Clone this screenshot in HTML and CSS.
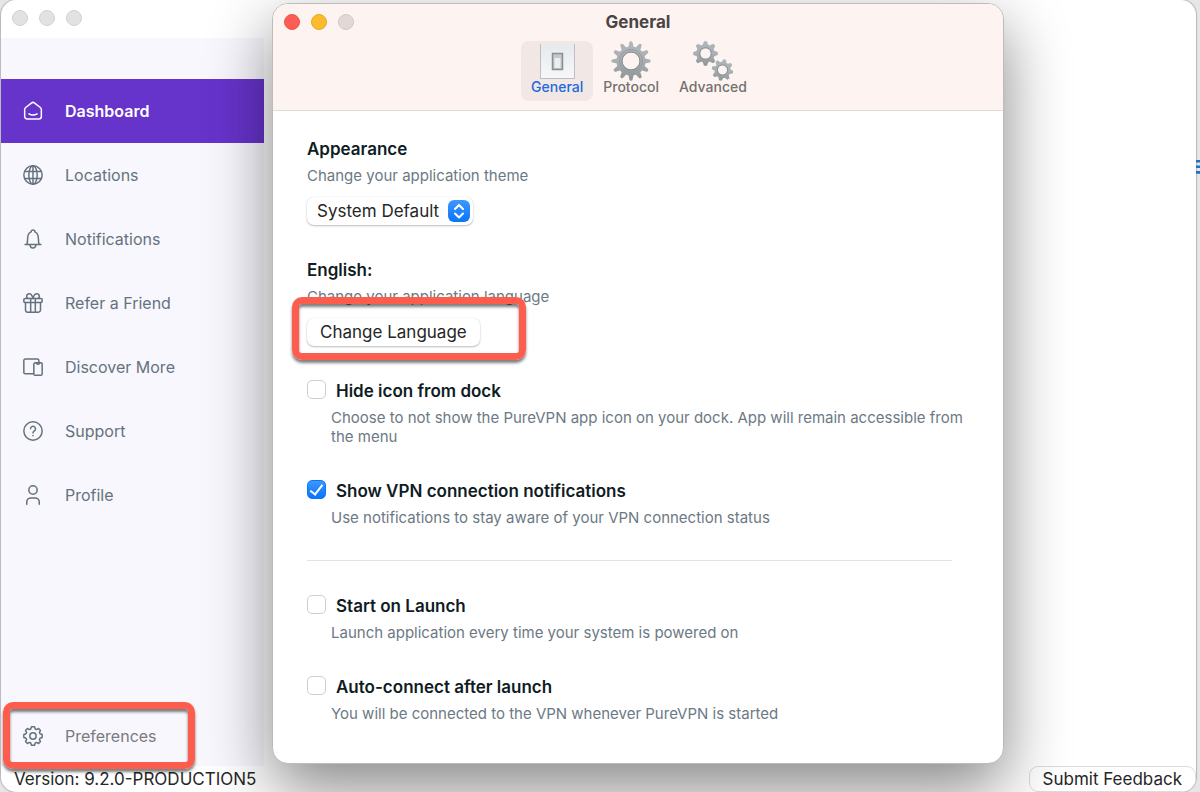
FILE: index.html
```html
<!DOCTYPE html>
<html lang="en">
<head>
  <meta charset="UTF-8" />
  <meta name="viewport" content="width=device-width, initial-scale=1.0"/>
  <title>PureVPN Preferences</title>
  <link rel="stylesheet" href="styles.css">
</head>
<body>

  <!-- Window behind, only its edge shows -->
  <svg class="backdrop-mark" viewBox="0 0 4 14" aria-hidden="true">
    <path d="M0 1.2h4M0 6.8h4M0 12.4h4" fill="none" stroke="#1f72c4" stroke-width="2.6"/>
  </svg>

  <!-- Main window -->
  <div class="app">
    <div class="titlebar">
      <span class="dot"></span>
      <span class="dot"></span>
      <span class="dot"></span>
    </div>

    <nav class="sidebar">
      <a class="nav-item active" href="#dashboard">
        <svg class="nav-icon" viewBox="0 0 24 24"><path d="M2 10.200c0-1 .4-1.800 1.200-2.400L10.400 2.300a2.600 2.600 0 0 1 3.200 0l7.200 5.500c.8.600 1.200 1.400 1.200 2.400V18.500a3 3 0 0 1-3 3H5a3 3 0 0 1-3-3z"/><path d="M7 15.500q5 2.600 10 0"/></svg>
        Dashboard
      </a>
      <a class="nav-item" href="#locations">
        <svg class="nav-icon" viewBox="0 0 24 24"><circle cx="12" cy="12" r="11"/><ellipse cx="12" cy="12" rx="5" ry="11"/><path d="M12 1v22M2.500 7.800h19M2.500 16.200h19"/></svg>
        Locations
      </a>
      <a class="nav-item" href="#notifications">
        <svg class="nav-icon" viewBox="0 0 24 24"><path d="M2.500 18.500h19M4.500 18.500c1-1.500 1-3.500 1-6.500 0-4.500 1.500-7.500 4.200-8.500 0-3 4.600-3 4.600 0 2.700 1 4.200 4 4.200 8.500 0 3 0 5 1 6.500M8.500 18.800a3.500 4 0 0 0 7 0"/></svg>
        Notifications
      </a>
      <a class="nav-item" href="#refer">
        <svg class="nav-icon" viewBox="0 0 24 24"><rect x="1" y="6.500" width="22" height="5" rx="1.500"/><path d="M3 11.500v9A2.500 2.500 0 0 0 5.500 23h13a2.500 2.500 0 0 0 2.500-2.500v-9M9.200 6.500V23M14.800 6.500V23M12 6.500C11 2.500 9.500 1 7.500 1 3.800 1 3.600 6 6 6.500M12 6.500C13 2.500 14.500 1 16.500 1c3.700 0 3.900 5 1.500 5.500"/></svg>
        Refer a Friend
      </a>
      <a class="nav-item" href="#discover">
        <svg class="nav-icon" viewBox="0 0 24 24"><path d="M12.500 20h-10A1.500 1.500 0 0 1 1 18.500V4a1.500 1.500 0 0 1 1.500-1.500h15A1.500 1.500 0 0 1 19 4v3"/><rect x="13" y="7" width="10" height="15" rx="1.500"/><path d="M16 7.500q2 2.500 4 0"/></svg>
        Discover More
      </a>
      <a class="nav-item" href="#support">
        <svg class="nav-icon" viewBox="0 0 24 24"><circle cx="12" cy="12" r="11"/><path d="M9 9.200a3 3 0 1 1 4.600 2.600c-1.100.7-1.600 1.300-1.600 2.700M12 17.500v.3"/></svg>
        Support
      </a>
      <a class="nav-item" href="#profile">
        <svg class="nav-icon" viewBox="0 0 24 24"><circle cx="12" cy="6" r="5"/><path d="M4.500 23v-2.500a5 5 0 0 1 5-5h5a5 5 0 0 1 5 5V23"/></svg>
        Profile
      </a>
      <a class="nav-item preferences callout" href="#preferences">
        <svg class="nav-icon" viewBox="-12 -12 24 24"><path d="M-1.800-11H1.800L2.700-8.400 4.300-7.700 6.700-9 9-6.700 7.700-4.300 8.400-2.700 11-1.800V1.800L8.400 2.700 7.700 4.300 9 6.700 6.700 9 4.300 7.700 2.700 8.400 1.800 11H-1.800L-2.700 8.400-4.300 7.700-6.700 9-9 6.700-7.700 4.300-8.400 2.700-11 1.800V-1.800L-8.400-2.700-7.700-4.300-9-6.700-6.700-9-4.300-7.700-2.700-8.400Z"/><circle r="3.800"/></svg>
        Preferences
      </a>
    </nav>

    <div class="statusbar">
      <span>Version: 9.2.0-PRODUCTION5</span>
      <button class="feedback" type="button">Submit Feedback</button>
    </div>
  </div>

  <!-- Preferences window -->
  <div class="dialog" role="dialog" aria-labelledby="dialogTitle">
    <header class="toolbar">
      <div class="lights">
        <span class="dot red"></span>
        <span class="dot yellow"></span>
        <span class="dot gray"></span>
      </div>
      <h1 id="dialogTitle">General</h1>
      <div class="tabs">
        <button class="tab selected" type="button">
          <svg class="tab-icon" viewBox="0 0 40 40">
            <defs>
              <linearGradient id="plate" x1="0" y1="0" x2="0" y2="1"><stop offset="0" stop-color="#e6eaed"/><stop offset="1" stop-color="#f6f7f8"/></linearGradient>
              <linearGradient id="metal" x1="0" y1="0" x2="0" y2="1"><stop offset="0" stop-color="#b0b6b9"/><stop offset=".5" stop-color="#a9afb2"/><stop offset="1" stop-color="#8e9396"/></linearGradient>
            </defs>
            <rect x="3" y="3" width="35" height="35" fill="#bfbfc0"/>
            <rect x="4" y="3" width="33" height="34" fill="url(#plate)"/>
            <rect x="15.500" y="12.500" width="10" height="16" fill="#c5c8ca" stroke="#8b8f91" stroke-width="1.500"/>
            <rect x="17.500" y="17" width="6" height="10" fill="#eceeef"/>
          </svg>
          General
        </button>
        <button class="tab" type="button">
          <svg class="tab-icon" viewBox="-20 -20 40 40">
            <defs>
              <path id="tooth" d="M-2.800-13 L-1.600-18.500Q-1.400-19.700 0-19.700T1.600-18.500L2.800-13Z"/>
              <g id="cog">
                <circle r="14.500"/>
                <use href="#tooth"/><use href="#tooth" transform="rotate(30)"/><use href="#tooth" transform="rotate(60)"/><use href="#tooth" transform="rotate(90)"/>
                <use href="#tooth" transform="rotate(120)"/><use href="#tooth" transform="rotate(150)"/><use href="#tooth" transform="rotate(180)"/><use href="#tooth" transform="rotate(210)"/>
                <use href="#tooth" transform="rotate(240)"/><use href="#tooth" transform="rotate(270)"/><use href="#tooth" transform="rotate(300)"/><use href="#tooth" transform="rotate(330)"/>
              </g>
              <mask id="cogMask" maskUnits="userSpaceOnUse" x="-20" y="-20" width="40" height="40"><use href="#cog" fill="#fff"/><circle r="8.500" fill="#000"/></mask>
            </defs>
            <rect x="-20" y="-20" width="40" height="40" fill="url(#metal)" mask="url(#cogMask)"/>
            <circle r="11.500" fill="none" stroke="#949a9d"/>
            <circle r="9" fill="none" stroke="#858a8d"/>
          </svg>
          Protocol
        </button>
        <button class="tab" type="button">
          <svg class="tab-icon" viewBox="0 0 40 40">
            <defs>
              <path id="tooth2" d="M-2.800-8.500L-1.500-12.300H1.500L2.800-8.500Z"/>
              <g id="cog2">
                <circle r="9.300"/>
                <use href="#tooth2"/><use href="#tooth2" transform="rotate(45)"/><use href="#tooth2" transform="rotate(90)"/><use href="#tooth2" transform="rotate(135)"/>
                <use href="#tooth2" transform="rotate(180)"/><use href="#tooth2" transform="rotate(225)"/><use href="#tooth2" transform="rotate(270)"/><use href="#tooth2" transform="rotate(315)"/>
              </g>
              <mask id="cogMask2" maskUnits="userSpaceOnUse" x="-13" y="-13" width="26" height="26"><use href="#cog2" fill="#fff"/><circle r="5.300" fill="#000"/></mask>
            </defs>
            <g transform="translate(12.500 12.500)"><rect x="-13" y="-13" width="26" height="26" fill="url(#metal)" mask="url(#cogMask2)"/><circle r="5.800" fill="none" stroke="#8c9194"/></g>
            <g transform="translate(29.500 29) rotate(12) scale(.88)"><rect x="-13" y="-13" width="26" height="26" fill="url(#metal)" mask="url(#cogMask2)"/><circle r="5.800" fill="none" stroke="#8c9194"/></g>
          </svg>
          Advanced
        </button>
      </div>
    </header>

    <div class="content">
      <section>
        <h2><label for="theme">Appearance</label></h2>
        <p>Change your application theme</p>
        <div class="select-wrap">
          <select id="theme">
            <option>System Default</option>
          </select>
          <svg class="stepper" viewBox="0 0 22 22"><path d="M7 9l4-4 4 4M7 13.500l4 4 4-4"/></svg>
        </div>
      </section>

      <section>
        <h2>English:</h2>
        <p>Change your application language</p>
        <div class="language callout">
          <button class="push" type="button">Change Language</button>
        </div>
      </section>

      <section class="option">
        <input type="checkbox" id="hideDock">
        <label for="hideDock">Hide icon from dock</label>
        <p>Choose to not show the PureVPN app icon on your dock. App will remain accessible from the menu</p>
      </section>

      <section class="option">
        <input type="checkbox" id="showNotif" checked>
        <label for="showNotif">Show VPN connection notifications</label>
        <p>Use notifications to stay aware of your VPN connection status</p>
      </section>

      <hr>

      <section class="option">
        <input type="checkbox" id="startLaunch">
        <label for="startLaunch">Start on Launch</label>
        <p>Launch application every time your system is powered on</p>
      </section>

      <section class="option">
        <input type="checkbox" id="autoConnect">
        <label for="autoConnect">Auto-connect after launch</label>
        <p>You will be connected to the VPN whenever PureVPN is started</p>
      </section>
    </div>
  </div>

</body>
</html>
```
FILE: styles.css
```css
*, *::after {
  box-sizing: border-box;
}

body {
  margin: 0;
  min-height: 100vh;
  display: flex;
  padding: 0 4px 0 1px;
  position: relative;
  overflow: hidden;
  font-family: Inter, "Liberation Sans", sans-serif;
  background: #e6e6e8;
}

button, select {
  font-family: inherit;
}

.backdrop-mark {
  position: absolute;
  right: 0;
  top: 160px;
  width: 4px;
  height: 14px;
}

/* Main window */
.app {
  flex: 1;
  display: flex;
  flex-direction: column;
  background: #fff;
  border-radius: 15px;
  box-shadow: 0 0 1px 1px rgba(0,0,0,0.2);
  overflow: hidden;
}

.titlebar {
  display: flex;
  gap: 11px;
  padding: 10px 11px;
  height: 38px;
}

.dot {
  width: 16px;
  height: 16px;
  border-radius: 50%;
  background: #e2e2e2;
  border: 1px solid #d2d2d2;
}

.sidebar {
  flex: 1;
  width: 263px;
  display: flex;
  flex-direction: column;
  padding-top: 41px;
  background: #f8f7fd;
}

.nav-item {
  display: flex;
  align-items: center;
  gap: 22px;
  height: 64px;
  padding-left: 22px;
  font-size: 16px;
  font-weight: 400;
  color: #65727d;
  text-decoration: none;
}

.nav-item.active {
  background: #6633cb;
  color: #fff;
  font-weight: 600;
}

.nav-icon {
  width: 20px;
  height: 20px;
  fill: none;
  stroke: currentColor;
  stroke-width: 1.8;
  stroke-linecap: round;
  stroke-linejoin: round;
}

.nav-item.preferences {
  height: 60px;
  margin-top: auto;
  color: #7a7b7f;
}

.preferences .nav-icon {
  stroke: #65727d;
}

.statusbar {
  display: flex;
  justify-content: space-between;
  height: 26px;
  padding-left: 13px;
  font-size: 17px;
  line-height: 26px;
  color: #262626;
}

.feedback {
  padding: 0 13px;
  border: 1px solid #dcdcdc;
  border-radius: 9px;
  background: #fff;
  font-size: 17px;
  color: #262626;
}

/* Red outline round the steps to follow */
.callout {
  position: relative;
}

.callout::after {
  content: "";
  position: absolute;
  border: 7px solid #fc5d4d;
  border-radius: 10px;
  box-shadow: 0 3px 3px rgba(0,0,0,0.5), inset 0 3px 3px rgba(0,0,0,0.5);
  pointer-events: none;
}

.preferences::after {
  inset: -4px 69px -3px 2px;
}

.language::after {
  inset: -21px auto -14px -15px;
  width: 234px;
}

/* Preferences window */
.dialog {
  position: absolute;
  left: 272px;
  top: 3px;
  width: 61%;
  background: #fff;
  border-radius: 16px;
  border: 1px solid #bdbbbc;
  box-shadow: 0 24px 64px rgba(0,0,0,0.48);
}

.toolbar {
  position: relative;
  padding: 6px 0 9px;
  background: #fdf4f1;
  border-bottom: 1px solid #dedbda;
  border-radius: 15px 15px 0 0;
}

.lights {
  position: absolute;
  left: 11px;
  top: 10px;
  display: flex;
  gap: 11px;
}

.dot.red {
  background: #ff5c55;
  border-color: #e9524c;
}

.dot.yellow {
  background: #fcbb2d;
  border-color: #e5a826;
}

.dot.gray {
  background: #e2d9d7;
  border-color: #d3cac8;
}

h1 {
  margin: 0 0 7px;
  font-size: 17px;
  line-height: 24px;
  font-weight: 700;
  text-align: center;
  color: #4a4544;
}

.tabs {
  display: flex;
  justify-content: center;
  padding-left: 2px;
}

.tab {
  display: flex;
  flex-direction: column;
  align-items: center;
  height: 60px;
  padding: 0 10px;
  border: none;
  border-radius: 8px;
  background: none;
  font-size: 14px;
  line-height: 12px;
  font-weight: 500;
  color: #75706e;
}

.tab.selected {
  background: #f1e8e6;
  color: #2368dc;
}

.tab-icon {
  width: 40px;
  height: 40px;
}

.content {
  display: flex;
  flex-direction: column;
  gap: 33px;
  padding: 26px 33px 40px 34px;
}

h2, .option label {
  margin: 0;
  font-size: 17px;
  line-height: 24px;
  font-weight: 600;
  color: #0f1c24;
}

p {
  margin: 5px 0 0;
  font-size: 15px;
  line-height: 19px;
  color: #6c7984;
}

.select-wrap {
  position: relative;
  width: max-content;
  margin-top: 12px;
}

select {
  appearance: none;
  display: block;
  width: 166px;
  height: 28px;
  padding: 0 33px 0 10px;
  border: none;
  border-radius: 7px;
  background: #fff;
  box-shadow: 0 1px 2px rgba(0,0,0,0.25), 0 0 1px rgba(0,0,0,0.15);
  font-size: 17px;
  color: #262626;
}

.stepper {
  position: absolute;
  right: 3px;
  top: 3px;
  width: 22px;
  height: 22px;
  border-radius: 6px;
  background: linear-gradient(#3d97ff, #0a74fb);
  fill: none;
  stroke: #fff;
  stroke-width: 2;
  stroke-linecap: round;
  stroke-linejoin: round;
  pointer-events: none;
}

.language {
  margin-top: 12px;
}

.push {
  display: block;
  height: 28px;
  padding: 0 13px;
  border: none;
  border-radius: 7px;
  background: #fff;
  box-shadow: 0 1px 2px rgba(0,0,0,0.25), 0 0 1px rgba(0,0,0,0.15);
  font-size: 17px;
  color: #262626;
}

.option {
  display: grid;
  grid-template-columns: 19px 1fr;
  column-gap: 10px;
}

.option p {
  grid-column: 1 / -1;
  margin-left: 24px;
}

input[type="checkbox"] {
  appearance: none;
  width: 19px;
  height: 19px;
  margin: 1px 0 0;
  border: 1px solid #cfcfcf;
  border-radius: 5px;
  background: #fff;
}

input[type="checkbox"]:checked {
  border-color: #0a78fb;
  background: linear-gradient(#3d97ff, #0a74fb);
}

/* tick mark */
input[type="checkbox"]:checked::after {
  content: "";
  display: block;
  width: 7px;
  height: 13px;
  margin: 1px 0 0 5px;
  border: solid #fff;
  border-width: 0 2px 2px 0;
  transform: rotate(38deg);
}

hr {
  align-self: stretch;
  margin: 0 18px 0 0;
  border: none;
  border-top: 1px solid #e2e2e2;
}
```
